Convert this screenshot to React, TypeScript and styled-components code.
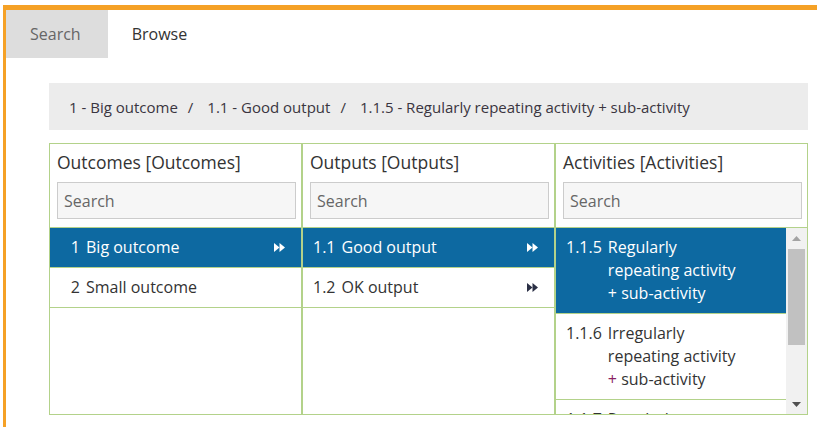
import React from 'react'
import styled, { createGlobalStyle } from 'styled-components'

const GlobalStyle = createGlobalStyle`
  html, body {
    margin: 0;
    padding: 0;
    background: #ffffff;
    font-family: 'Open Sans', 'Liberation Sans', sans-serif;
    color: #333333;
  }
  * {
    box-sizing: border-box;
  }
`

const Frame = styled.div`
  margin: 5px 0 0 3px;
  border-top: 5px solid #f5a126;
  border-left: 3px solid #f5a126;
  height: 422px;
  overflow: hidden;
`

const TabBar = styled.div`
  display: flex;
  height: 48px;
`

const Tab = styled.div<{ $active?: boolean }>`
  display: flex;
  align-items: center;
  padding: 0 27px 0 24px;
  font-size: 16px;
  background: ${(p) => (p.$active ? '#dddddd' : 'transparent')};
  color: ${(p) => (p.$active ? '#666666' : '#333333')};
`

const Content = styled.div`
  padding: 25px 9px 0 43px;
`

const Breadcrumb = styled.div`
  display: flex;
  align-items: center;
  height: 47px;
  padding: 0 20px;
  background: #ececec;
  font-size: 15px;
  color: #3a3540;
`

const Sep = styled.span`
  margin: 0 14px 0 10px;
`

const Columns = styled.div`
  display: flex;
  height: 272px;
  margin-top: 13px;
`

const Column = styled.div`
  flex: 1;
  min-width: 0;
  display: flex;
  flex-direction: column;
  border: 1px solid #b3d28a;
`

const ColumnHeader = styled.div`
  padding: 6px 5px 8px 7px;
`

const ColumnTitle = styled.div`
  font-size: 17.5px;
  line-height: 25px;
  color: #333333;
  margin-bottom: 7px;
`

const SearchInput = styled.input`
  display: block;
  width: 100%;
  height: 37px;
  padding: 0 6px;
  border: 1px solid #cccccc;
  background: #f6f6f6;
  font-family: inherit;
  font-size: 16px;
  color: #333333;
  outline: none;

  &::placeholder {
    color: #666666;
  }
`

const List = styled.div`
  flex: 1;
  min-height: 0;
  display: flex;
  border-top: 1px solid #b3d28a;
  overflow: hidden;
`

const ListBody = styled.div`
  flex: 1;
  min-width: 0;
  overflow: hidden;
`

const Scrollbar = styled.div`
  flex: none;
  width: 21px;
  display: flex;
  flex-direction: column;
  background: #f1f1f1;
`

const ScrollButton = styled.div`
  flex: none;
  height: 20px;
  display: flex;
  align-items: center;
  justify-content: center;
`

const ScrollTrack = styled.div`
  flex: 1;
  padding: 1px 2px 0;
`

const ScrollThumb = styled.div`
  height: 96px;
  background: #c1c1c1;
`

const Row = styled.div<{ $selected?: boolean }>`
  display: flex;
  align-items: flex-start;
  padding: 8px 16px 8px 10px;
  font-size: 16px;
  line-height: 23px;
  border-bottom: 1px solid #b3d28a;
  background: ${(p) => (p.$selected ? '#0d69a1' : '#ffffff')};
  color: ${(p) => (p.$selected ? '#ffffff' : '#333333')};
`

const Num = styled.span`
  min-width: 20px;
  margin-right: 6px;
  text-align: right;
  white-space: nowrap;
`

const Label = styled.span`
  flex: 1;
  min-width: 0;
`

const Plus = styled.span<{ $selected?: boolean }>`
  color: ${(p) => (p.$selected ? '#ffffff' : '#8a1f62')};
`

const IconSlot = styled.span`
  flex: none;
  width: 11px;
  margin-left: 12px;
  height: 23px;
  display: flex;
  align-items: center;
`

const DoubleArrow = ({ color }: { color: string }) => (
  <svg width="11" height="9" viewBox="0 0 11 9">
    <polygon points="0,0 5.5,4.5 0,9" fill={color} />
    <polygon points="5.5,0 11,4.5 5.5,9" fill={color} />
  </svg>
)

const ScrollArrow = ({ down }: { down?: boolean }) => (
  <svg width="9" height="5" viewBox="0 0 9 5">
    <polygon points={down ? '0,0 9,0 4.5,5' : '0,5 9,5 4.5,0'} fill={down ? '#505050' : '#a3a3a3'} />
  </svg>
)

type Item = {
  num: string
  text: string
  sub?: boolean
  selected?: boolean
  arrow?: boolean
}

const outcomes: Item[] = [
  { num: '1', text: 'Big outcome', selected: true, arrow: true },
  { num: '2', text: 'Small outcome' },
]

const outputs: Item[] = [
  { num: '1.1', text: 'Good output', selected: true, arrow: true },
  { num: '1.2', text: 'OK output', arrow: true },
]

const activities: Item[] = [
  { num: '1.1.5', text: 'Regularly repeating activity', sub: true, selected: true },
  { num: '1.1.6', text: 'Irregularly repeating activity', sub: true },
  { num: '1.1.7', text: 'Regularly repeating activity', sub: true },
  { num: '1.1.8', text: 'Occasional activity' },
]

const ItemRow = ({ item }: { item: Item }) => (
  <Row $selected={item.selected}>
    <Num>{item.num}</Num>
    <Label>
      {item.text}
      {item.sub && (
        <>
          {' '}
          <Plus $selected={item.selected}>+</Plus> sub-activity
        </>
      )}
    </Label>
    <IconSlot>
      {item.arrow && <DoubleArrow color={item.selected ? '#ffffff' : '#2a2f45'} />}
    </IconSlot>
  </Row>
)

const BrowseColumn = ({
  title,
  items,
  scroll,
}: {
  title: string
  items: Item[]
  scroll?: boolean
}) => (
  <Column>
    <ColumnHeader>
      <ColumnTitle>{title}</ColumnTitle>
      <SearchInput placeholder="Search" />
    </ColumnHeader>
    <List>
      <ListBody>
        {items.map((item) => (
          <ItemRow key={item.num} item={item} />
        ))}
      </ListBody>
      {scroll && (
        <Scrollbar>
          <ScrollButton>
            <ScrollArrow />
          </ScrollButton>
          <ScrollTrack>
            <ScrollThumb />
          </ScrollTrack>
          <ScrollButton>
            <ScrollArrow down />
          </ScrollButton>
        </Scrollbar>
      )}
    </List>
  </Column>
)

export default function App() {
  return (
    <>
      <GlobalStyle />
      <Frame>
        <TabBar>
          <Tab $active>Search</Tab>
          <Tab>Browse</Tab>
        </TabBar>
        <Content>
          <Breadcrumb>
            1 - Big outcome
            <Sep>/</Sep>
            1.1 - Good output
            <Sep>/</Sep>
            1.1.5 - Regularly repeating activity + sub-activity
          </Breadcrumb>
          <Columns>
            <BrowseColumn title="Outcomes [Outcomes]" items={outcomes} />
            <BrowseColumn title="Outputs [Outputs]" items={outputs} />
            <BrowseColumn title="Activities [Activities]" items={activities} scroll />
          </Columns>
        </Content>
      </Frame>
    </>
  )
}
